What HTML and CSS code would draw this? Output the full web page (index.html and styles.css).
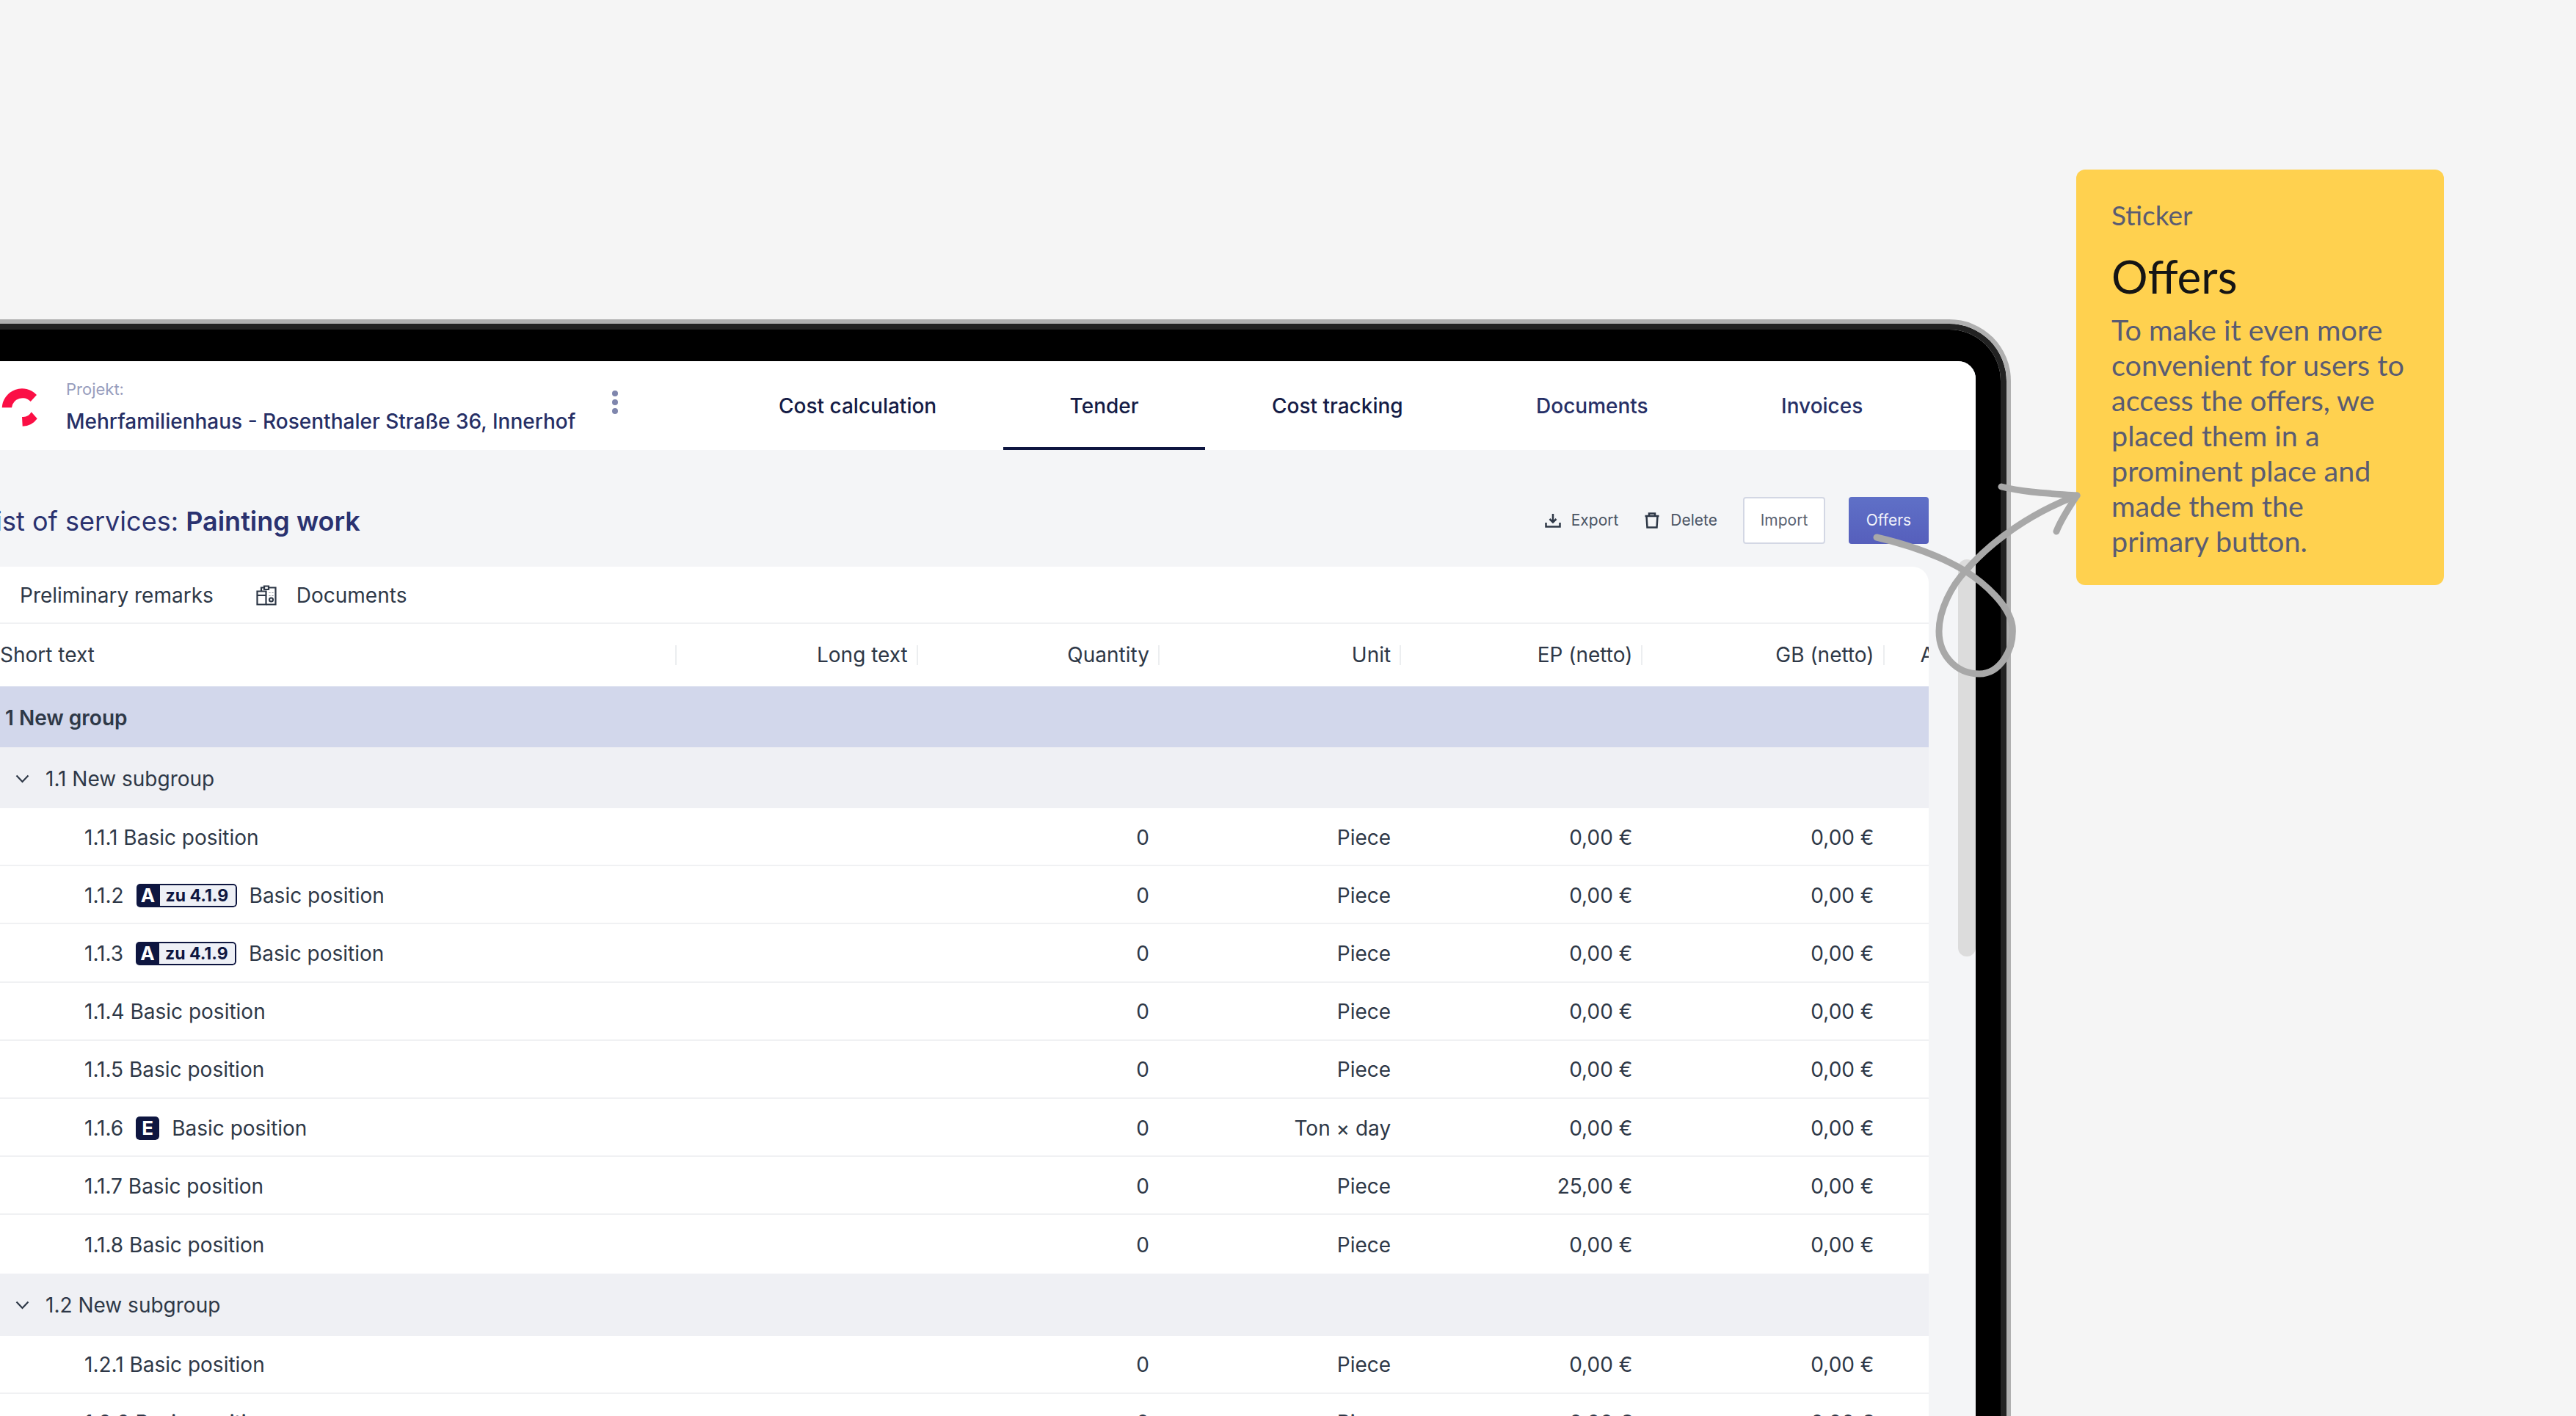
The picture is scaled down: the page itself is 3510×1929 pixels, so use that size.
FILE: index.html
```html
<!DOCTYPE html>
<html lang="en">
<head>
  <meta charset="UTF-8" />
  <title>Offers sticker</title>
  <link rel="stylesheet" href="styles.css">
</head>
<body>
  <div class="device">
    <div class="device-edge">
      <div class="bezel">
        <div class="screen">
          <header class="topbar">
            <svg class="logo" width="54" height="54" viewBox="0 0 54 54">
              <path d="M2.700 27.300A27.300 27.300 0 0 1 50 10L41.700 19A15 15 0 0 0 16 27.300Z" />
              <path d="M42.700 33.300L50.700 42.300A25 25 0 0 1 30.700 52.700L30 40A13 13 0 0 0 42.700 33.300Z" />
            </svg>
            <div class="project">
              <div class="project-label">Projekt:</div>
              <div class="project-name">Mehrfamilienhaus - Rosenthaler Straße 36, Innerhof</div>
            </div>
            <div class="dots"><i></i><i></i><i></i></div>
            <nav class="tabs">
              <a class="tab dark">Cost calculation</a>
              <a class="tab dark active">Tender</a>
              <a class="tab dark">Cost tracking</a>
              <a class="tab">Documents</a>
              <a class="tab">Invoices</a>
            </nav>
          </header>

          <div class="scroll-thumb"></div>

          <main class="content">
            <div class="title-row">
              <h1 class="title">List of services: <b>Painting work</b></h1>
              <div class="actions">
                <span class="action">
                  <svg width="22" height="20" viewBox="0 0 22 20"><path d="M11 1V12M6.500 8L11 12.500 15.500 8M1.500 13V18.500H20.500V13" /></svg>
                  Export
                </span>
                <span class="action">
                  <svg width="22" height="22" viewBox="0 0 22 22"><path d="M1.500 5H20.500M7 5V1.500H15V5M3.500 5L4.500 20.500H17.500L18.500 5" /></svg>
                  Delete
                </span>
                <span class="btn">Import</span>
                <span class="btn primary">Offers</span>
              </div>
            </div>

            <section class="card">
              <div class="subtabs">
                <span>Preliminary remarks</span>
                <span class="subtab-docs">
                  <svg width="28" height="28" viewBox="0 0 28 28">
                    <path d="M7 8V3.500H11V1.500H17V3.500H26.500V26.500H14" />
                    <path d="M11 3.500V6H17V3.500" />
                    <path d="M1.500 8.500H13.500V26.500H1.500ZM1.500 14H13.500" />
                    <circle cx="20.500" cy="20" r="2.500" />
                    <path d="M18.500 10V10.500M22.500 10V10.500M18.500 14V14.500M22.500 14V14.500" />
                  </svg>
                  Documents
                </span>
              </div>

              <div class="grid-row head">
                <div class="th first">Short text</div>
                <div class="th">Long text</div>
                <div class="th">Quantity</div>
                <div class="th">Unit</div>
                <div class="th">EP (netto)</div>
                <div class="th">GB (netto)</div>
                <div class="th last">Actions</div>
              </div>

              <div class="group">1 New group</div>

              <div class="subgroup">
                <svg width="19" height="12" viewBox="0 0 19 12"><path d="M1.500 1.500L9.500 10 17.500 1.500" /></svg>
                1.1 New subgroup
              </div>

              <div class="grid-row pos">
                <div class="name">1.1.1 Basic position</div><div></div>
                <div class="num">0</div><div class="num">Piece</div><div class="num">0,00 €</div><div class="num">0,00 €</div>
              </div>
              <div class="grid-row pos">
                <div class="name">1.1.2 <span class="badge"><span class="badge-key">A</span><span class="badge-ref">zu 4.1.9</span></span> Basic position</div><div></div>
                <div class="num">0</div><div class="num">Piece</div><div class="num">0,00 €</div><div class="num">0,00 €</div>
              </div>
              <div class="grid-row pos">
                <div class="name">1.1.3 <span class="badge"><span class="badge-key">A</span><span class="badge-ref">zu 4.1.9</span></span> Basic position</div><div></div>
                <div class="num">0</div><div class="num">Piece</div><div class="num">0,00 €</div><div class="num">0,00 €</div>
              </div>
              <div class="grid-row pos">
                <div class="name">1.1.4 Basic position</div><div></div>
                <div class="num">0</div><div class="num">Piece</div><div class="num">0,00 €</div><div class="num">0,00 €</div>
              </div>
              <div class="grid-row pos">
                <div class="name">1.1.5 Basic position</div><div></div>
                <div class="num">0</div><div class="num">Piece</div><div class="num">0,00 €</div><div class="num">0,00 €</div>
              </div>
              <div class="grid-row pos">
                <div class="name">1.1.6 <span class="badge"><span class="badge-key solo">E</span></span> Basic position</div><div></div>
                <div class="num">0</div><div class="num">Ton × day</div><div class="num">0,00 €</div><div class="num">0,00 €</div>
              </div>
              <div class="grid-row pos">
                <div class="name">1.1.7 Basic position</div><div></div>
                <div class="num">0</div><div class="num">Piece</div><div class="num">25,00 €</div><div class="num">0,00 €</div>
              </div>
              <div class="grid-row pos no-line">
                <div class="name">1.1.8 Basic position</div><div></div>
                <div class="num">0</div><div class="num">Piece</div><div class="num">0,00 €</div><div class="num">0,00 €</div>
              </div>

              <div class="subgroup tall">
                <svg width="19" height="12" viewBox="0 0 19 12"><path d="M1.500 1.500L9.500 10 17.500 1.500" /></svg>
                1.2 New subgroup
              </div>

              <div class="grid-row pos">
                <div class="name">1.2.1 Basic position</div><div></div>
                <div class="num">0</div><div class="num">Piece</div><div class="num">0,00 €</div><div class="num">0,00 €</div>
              </div>
              <div class="grid-row pos">
                <div class="name">1.2.2 Basic position</div><div></div>
                <div class="num">0</div><div class="num">Piece</div><div class="num">0,00 €</div><div class="num">0,00 €</div>
              </div>
            </section>
          </main>
        </div>
      </div>
    </div>
  </div>

  <aside class="sticker">
    <div class="sticker-label">Sticker</div>
    <h2 class="sticker-title">Offers</h2>
    <p class="sticker-text">To make it even more<br>convenient for users to<br>access the offers, we<br>placed them in a<br>prominent place and<br>made them the<br>primary button.</p>
  </aside>

  <svg class="arrow" width="3510" height="1929" viewBox="0 0 3510 1929">
    <path d="M2557 732C2600 742 2640 755 2678 778C2705 795 2738 825 2742 853C2745 885 2725 918 2697 918C2665 918 2642 892 2642 860C2642 830 2660 797 2678 778C2715 735 2770 698 2830 675" />
    <path d="M2727 663C2760 671 2790 672 2830 675C2820 690 2808 708 2802 724" />
  </svg>
</body>
</html>
```

FILE: styles.css
```css
html, body {
  margin: 0;
  height: 1929px;
  overflow: hidden;
  background: #f5f5f5;
}
body {
  position: relative;
  font-family: Inter, "Liberation Sans", sans-serif;
  color: #2e3847;
}

/* tablet frame, runs off the left and bottom of the canvas */
.device {
  width: 2840px;
  height: 1494px;
  margin: 435px 0 0 -100px;
  box-sizing: border-box;
  border: 6px solid #b0b0b0;
  border-bottom: 0;
  border-radius: 0 84px 0 0;
  overflow: hidden;
}
.device-edge {
  height: 100%;
  box-sizing: border-box;
  border: 8px solid #222;
  border-bottom: 0;
  border-radius: 0 78px 0 0;
}
.bezel {
  height: 100%;
  box-sizing: border-box;
  padding: 43px 34px 0 34px;
  background: #000;
  border-radius: 0 70px 0 0;
}
.screen {
  position: relative;
  height: 100%;
  background: #f4f5f7;
  border-radius: 0 24px 0 0;
  overflow: hidden;
}

/* top bar */
.topbar {
  display: flex;
  align-items: center;
  height: 121px;
  padding: 0 63px 0 52px;
  background: #fff;
}
.logo {
  flex: none;
  margin-top: 4px;
  fill: #fb0f45;
}
.project {
  margin-left: 36px;
}
.project-label {
  font-size: 22px;
  line-height: 30px;
  color: #979dbd;
}
.project-name {
  margin-top: 12px;
  font-size: 28px;
  line-height: 34px;
  font-weight: 500;
  color: #262f66;
  white-space: nowrap;
}
.dots {
  display: flex;
  flex-direction: column;
  gap: 4px;
  margin-left: 50px;
  margin-top: -10px;
}
.dots i {
  width: 8px;
  height: 8px;
  border-radius: 50%;
  background: #7f86ad;
}
.tabs {
  display: flex;
  margin-left: auto;
  align-self: stretch;
}
.tab {
  display: flex;
  align-items: center;
  padding: 0 90.700px 0;
  font-size: 28px;
  font-weight: 500;
  color: #262f66;
  white-space: nowrap;
}
.tab.dark {
  color: #141b45;
}
.tab.active {
  box-shadow: inset 0 -4px 0 #0e1640;
}

.scroll-thumb {
  position: absolute;
  top: 270px;
  right: 0;
  width: 24px;
  height: 541px;
  background: #dcdcdc;
  border-radius: 12px;
}

/* title row */
.content {
  padding-right: 64px;
}
.title-row {
  display: flex;
  align-items: center;
  height: 159px;
  padding: 34px 0 0 26px;
  box-sizing: border-box;
}
.title {
  margin: 0;
  font-size: 36px;
  font-weight: 400;
  color: #2a3270;
  white-space: nowrap;
}
.title b {
  font-weight: 600;
}
.actions {
  display: flex;
  align-items: center;
  margin-left: auto;
  margin-top: -2px;
}
.action {
  display: flex;
  align-items: center;
  gap: 14px;
  margin-right: 35px;
  font-size: 21px;
  color: #4a5464;
}
.action svg {
  fill: none;
  stroke: #2e3847;
  stroke-width: 2.500;
}
.btn {
  display: flex;
  align-items: center;
  justify-content: center;
  box-sizing: border-box;
  width: 112px;
  height: 64px;
  border: 2px solid #d3d7e4;
  border-radius: 4px;
  background: #fff;
  font-size: 21px;
  color: #5a6272;
}
.btn.primary {
  width: 109px;
  margin-left: 32px;
  border: 0;
  background: linear-gradient(#5f70c7, #565fbc);
  color: #f2f3fb;
}

/* table card */
.card {
  background: #fff;
  border-radius: 0 22px 0 0;
  overflow: hidden;
}
.subtabs {
  display: flex;
  align-items: center;
  gap: 58px;
  height: 78px;
  padding: 2px 0 0 79px;
  box-sizing: border-box;
  border-bottom: 2px solid #f0f1f3;
  font-size: 28px;
}
.subtab-docs {
  display: flex;
  align-items: center;
  gap: 27px;
}
.subtab-docs svg {
  fill: none;
  stroke: #2e3847;
  stroke-width: 2.200;
}
.grid-row {
  display: grid;
  grid-template-columns: 973.600px repeat(5, 329.200px) 300px;
  align-items: center;
}
.head {
  height: 85px;
  font-size: 28px;
}
.th {
  height: 27px;
  line-height: 27px;
  padding-right: 12px;
  border-right: 2px solid #eceef0;
  text-align: right;
  white-space: nowrap;
}
.th.first {
  padding-left: 52px;
  text-align: left;
}
.th.last {
  padding: 0 0 0 49px;
  border: 0;
  text-align: left;
}
.group {
  display: flex;
  align-items: center;
  height: 83px;
  padding: 2px 0 0 59px;
  box-sizing: border-box;
  background: #d2d7eb;
  font-size: 28px;
  font-weight: 600;
}
.subgroup {
  display: flex;
  align-items: center;
  gap: 22px;
  height: 83px;
  padding: 2px 0 0 73px;
  box-sizing: border-box;
  background: #eff0f4;
  font-size: 28px;
}
.subgroup.tall {
  height: 85px;
}
.subgroup svg {
  fill: none;
  stroke: #2e3847;
  stroke-width: 2.200;
}
.pos {
  height: 79.200px;
  padding-top: 2px;
  box-sizing: border-box;
  border-bottom: 2px solid #f0f1f3;
  font-size: 28px;
}
.pos.no-line {
  border-bottom: 0;
}
.name {
  display: flex;
  align-items: center;
  gap: 17px;
  padding-left: 167px;
  white-space: nowrap;
}
.num {
  padding-right: 14px;
  text-align: right;
  white-space: nowrap;
}
.badge {
  display: inline-flex;
  height: 32px;
  box-sizing: border-box;
  border-radius: 5px;
  overflow: hidden;
  font-size: 23px;
  font-weight: 700;
}
.badge-key {
  display: flex;
  align-items: center;
  justify-content: center;
  width: 32px;
  background: #0e1640;
  color: #fff;
  font-size: 26px;
}
.badge-key.solo {
  border-radius: 5px;
}
.badge-ref {
  display: flex;
  align-items: center;
  width: 105px;
  padding-left: 8px;
  box-sizing: border-box;
  background: #eef0f6;
  border: 2px solid #0e1640;
  border-left: 0;
  border-radius: 0 5px 5px 0;
  color: #0e1640;
}

/* sticker */
.sticker {
  position: absolute;
  left: 2829px;
  top: 231px;
  width: 501px;
  height: 566px;
  box-sizing: border-box;
  padding: 44px 0 0 48px;
  background: #ffd14f;
  border-radius: 12px;
  font-family: Lato, "Liberation Sans", sans-serif;
  color: #5a5c72;
}
.sticker-label {
  font-size: 37px;
  line-height: 36px;
}
.sticker-title {
  margin: 30px 0 0;
  font-size: 62px;
  line-height: 70px;
  font-weight: 400;
  color: #151515;
}
.sticker-text {
  margin: 14px 0 0;
  font-size: 39.500px;
  line-height: 48px;
  white-space: nowrap;
}

/* hand drawn arrow over everything */
.arrow {
  position: absolute;
  left: 0;
  top: 0;
  fill: none;
  stroke: #a8a8a8;
  stroke-width: 9;
  stroke-linecap: round;
  stroke-linejoin: round;
  pointer-events: none;
}
```
